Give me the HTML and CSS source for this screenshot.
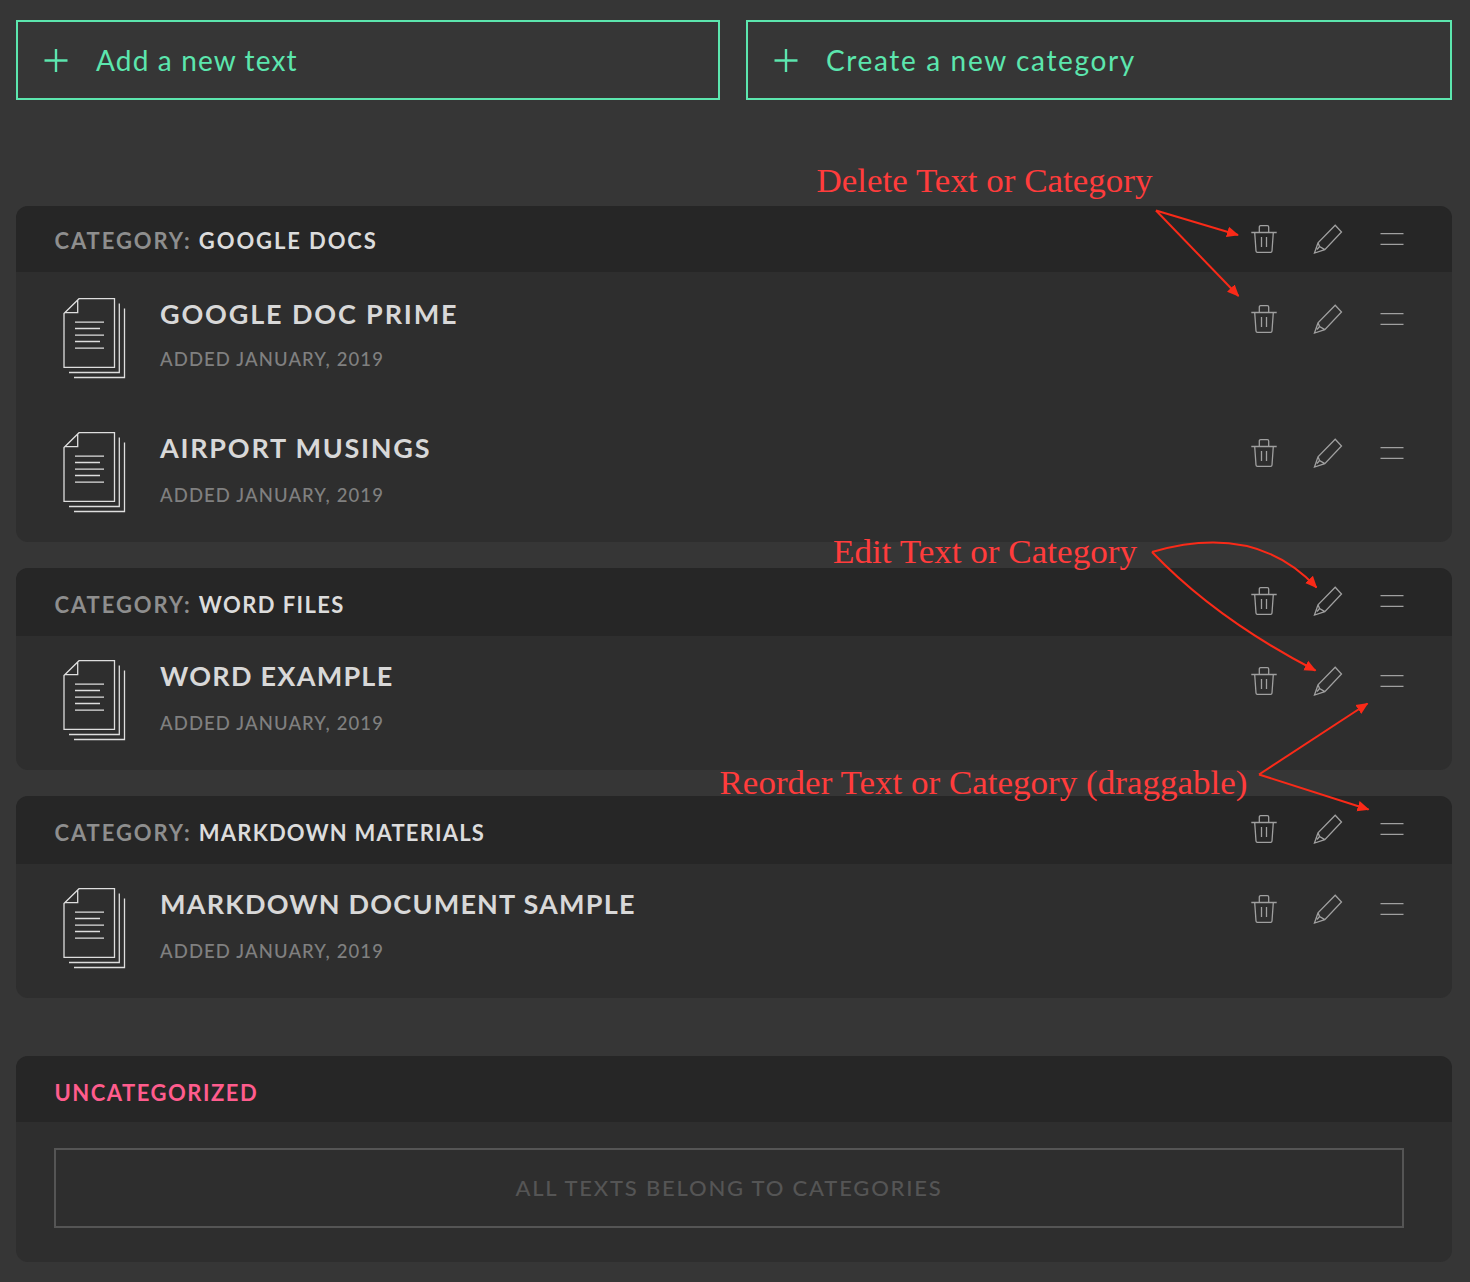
FILE: index.html
```html
<!DOCTYPE html>
<html lang="en">
<head>
<meta charset="utf-8">
<title>Texts</title>
<link rel="stylesheet" href="styles.css">
</head>
<body>
<svg class="defs" aria-hidden="true">
  <symbol id="plus" viewBox="0 0 24 24"><path d="M0.5 12.5H23.5M12 1V24"/></symbol>
  <symbol id="trash" viewBox="0 0 32 32"><path d="M3.3 9.5H28.7M11.3 9.5V4q0-1.4 1.4-1.4h6.6q1.4 0 1.4 1.4V9.5M6.7 9.5L8 28q.1 1.4 1.4 1.4h13.2q1.3 0 1.4-1.4L25.3 9.5M13.5 14V24M18.5 14V24"/></symbol>
  <symbol id="pencil" viewBox="0 0 32 32"><path d="M23.2 2.2L29.5 9L12.8 26.6L2.5 30L6 19.8ZM6 19.8L7.600 23.500L12.800 26.600M7.600 23.500L5 26.500"/></symbol>
  <symbol id="handle" viewBox="0 0 32 32"><path d="M4.5 10.6H27.5M4.5 21.3H27.5"/></symbol>
  <symbol id="doc" viewBox="0 0 64 82"><path d="M1 15.5L16 .7H51.500V69.300H1ZM14.700 2V14.700H2M56.300 5.500V74.500H6M61.500 10.500V79.500H11M12 24.200H41M12 30.500H37M12 37.200H41M12 43.500H37M12 50.200H41"/></symbol>
</svg>

<main class="page">
  <div class="toolbar">
    <button class="add"><svg><use href="#plus"/></svg><span class="add-text">Add a new text</span></button>
    <button class="add"><svg><use href="#plus"/></svg><span class="add-category">Create a new category</span></button>
  </div>

  <section class="card card-first">
    <header class="card-head head-short">
      <h2><span class="label">Category:</span> <span class="n1">Google Docs</span></h2>
      <div class="actions"><svg><use href="#trash"/></svg><svg><use href="#pencil"/></svg><svg><use href="#handle"/></svg></div>
    </header>
    <article class="item item-tight">
      <svg class="doc"><use href="#doc"/></svg>
      <div class="info"><h3 class="t1">Google Doc Prime</h3><p>Added January, 2019</p></div>
      <div class="actions"><svg><use href="#trash"/></svg><svg><use href="#pencil"/></svg><svg><use href="#handle"/></svg></div>
    </article>
    <article class="item">
      <svg class="doc"><use href="#doc"/></svg>
      <div class="info"><h3 class="t2">Airport Musings</h3><p>Added January, 2019</p></div>
      <div class="actions"><svg><use href="#trash"/></svg><svg><use href="#pencil"/></svg><svg><use href="#handle"/></svg></div>
    </article>
  </section>

  <section class="card">
    <header class="card-head">
      <h2><span class="label">Category:</span> <span class="n2">Word Files</span></h2>
      <div class="actions"><svg><use href="#trash"/></svg><svg><use href="#pencil"/></svg><svg><use href="#handle"/></svg></div>
    </header>
    <article class="item">
      <svg class="doc"><use href="#doc"/></svg>
      <div class="info"><h3 class="t3">Word Example</h3><p>Added January, 2019</p></div>
      <div class="actions"><svg><use href="#trash"/></svg><svg><use href="#pencil"/></svg><svg><use href="#handle"/></svg></div>
    </article>
  </section>

  <section class="card">
    <header class="card-head">
      <h2><span class="label">Category:</span> <span class="n3">Markdown Materials</span></h2>
      <div class="actions"><svg><use href="#trash"/></svg><svg><use href="#pencil"/></svg><svg><use href="#handle"/></svg></div>
    </header>
    <article class="item">
      <svg class="doc"><use href="#doc"/></svg>
      <div class="info"><h3 class="t4">Markdown Document Sample</h3><p>Added January, 2019</p></div>
      <div class="actions"><svg><use href="#trash"/></svg><svg><use href="#pencil"/></svg><svg><use href="#handle"/></svg></div>
    </article>
  </section>

  <section class="card uncategorized">
    <header class="card-head head-short"><h2>Uncategorized</h2></header>
    <div class="empty"><span>All texts belong to categories</span></div>
  </section>
</main>

<svg class="notes" viewBox="0 0 1470 1282">
  <defs>
    <marker id="tip" markerUnits="userSpaceOnUse" markerWidth="14" markerHeight="12" refX="11" refY="6" orient="auto"><path d="M0 .7L12 6L0 11.300Z"/></marker>
  </defs>
  <g class="arrows">
    <path d="M1156 210.500L1238 235"/>
    <path d="M1156 210.500L1238.500 296"/>
    <path d="M1152 552Q1256 522 1316.500 587.500"/>
    <path d="M1152 552Q1216 619 1315.500 670.500"/>
    <path d="M1259 774.500L1367.500 703.500"/>
    <path d="M1259 774.500L1368.500 809.500"/>
  </g>
  <text x="816.500" y="192" textLength="336" lengthAdjust="spacingAndGlyphs">Delete Text or Category</text>
  <text x="833" y="563" textLength="304" lengthAdjust="spacingAndGlyphs">Edit Text or Category</text>
  <text x="719.500" y="793.500" textLength="528" lengthAdjust="spacingAndGlyphs">Reorder Text or Category (draggable)</text>
</svg>
</body>
</html>
```
FILE: styles.css
```css
* { box-sizing: border-box; margin: 0; padding: 0; }

body {
  width: 1470px;
  height: 1282px;
  position: relative;
  overflow: hidden;
  background: #363636;
  font-family: Lato, sans-serif;
}

svg { fill: none; stroke: currentColor; stroke-width: 1.3; }
.defs { display: none; }

.page { padding: 20px 18px 0 16px; }

.toolbar { display: grid; grid-template-columns: 704px 706px; gap: 26px; }
.add {
  display: flex;
  align-items: center;
  gap: 28px;
  height: 80px;
  padding: 0 26px;
  border: 2px solid #5ce6ae;
  background: none;
  color: #5ce6ae;
  font: 28px/40px Lato, sans-serif;
}
.add svg { width: 24px; height: 24px; stroke-width: 2.4; }
.add-text, .add-category { white-space: nowrap; }
.add-text { letter-spacing: 1.15px; }
.add-category { letter-spacing: 1.65px; }

.card { margin-top: 26px; border-radius: 12px; overflow: hidden; background: #2e2e2e; }
.card-first { margin-top: 106px; }

.card-head {
  display: flex;
  justify-content: space-between;
  height: 68px;
  padding: 17px 28px 0 38.500px;
  background: #262626;
}
.head-short { height: 66px; }
.card-head h2 {
  padding-top: 5px;
  color: #dcdcdc;
  font-size: 22px;
  line-height: 30px;
  font-weight: 700;
  letter-spacing: 1.9px;
  text-transform: uppercase;
  white-space: nowrap;
}
.card-first h2 { padding-top: 3px; }
.label { color: #8e8e8e; }
.n2 { letter-spacing: 1.4px; }
.n3 { letter-spacing: 1.2px; }

.actions { display: flex; gap: 32px; padding: 0 16px; color: #a0a0a0; }
.actions svg { width: 32px; height: 32px; }

.item {
  display: flex;
  height: 134px;
  padding: 24px 28px 0 47px;
}
.item-tight { height: 136px; padding-top: 26px; }
.item .actions { margin: 5px 0 0 auto; }
.doc { width: 64px; height: 82px; color: #dedede; }
.info { margin-left: 33px; text-transform: uppercase; white-space: nowrap; }
.info h3 {
  margin-top: -1px;
  color: #d8d8d8;
  font-size: 27px;
  line-height: 34px;
  font-weight: 700;
}
.t1 { letter-spacing: 1.85px; }
.t2 { letter-spacing: 1.75px; }
.t3 { letter-spacing: 1.25px; }
.t4 { letter-spacing: 1.2px; }
.info p {
  margin-top: 17px;
  color: #808080;
  font-size: 18.500px;
  line-height: 26px;
  font-weight: 500;
  letter-spacing: 1.1px;
}
.item-tight p { margin-top: 15px; }

.uncategorized { height: 206px; margin-top: 58px; }
.uncategorized h2 { color: #ff5c8d; letter-spacing: 1.5px; }
.empty {
  display: flex;
  align-items: center;
  justify-content: center;
  height: 80px;
  margin: 26px 48px 0 38px;
  padding-bottom: 2px;
  border: 2px solid #555;
  color: #555;
  font-size: 22px;
  font-weight: 500;
  letter-spacing: 1.8px;
  text-transform: uppercase;
}

.notes { position: absolute; inset: 0; width: 1470px; height: 1282px; }
.notes text {
  fill: #ff3c3c;
  stroke: none;
  font: 33px "Liberation Serif", serif;
}
.arrows { stroke: #fa2a18; stroke-width: 2; }
.arrows path { marker-end: url(#tip); }
#tip path { fill: #fa2a18; stroke: none; marker-end: none; }
```
